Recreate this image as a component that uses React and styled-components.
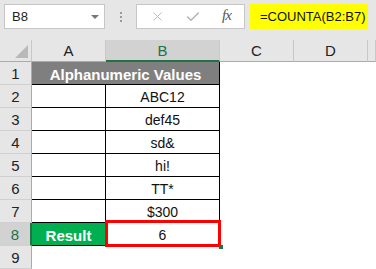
import styled, { createGlobalStyle } from "styled-components";
import { X, Check } from "lucide-react";

const GlobalStyle = createGlobalStyle`
  html, body {
    margin: 0;
    padding: 0;
    background: #ffffff;
    font-family: "Liberation Sans", Arial, sans-serif;
    overflow: hidden;
  }
`;

const columns = [
  { name: "A", width: 74 },
  { name: "B", width: 114, active: true },
  { name: "C", width: 74 },
  { name: "D", width: 74 },
  { name: "", width: 8 },
];

const values = ["ABC12", "def45", "sd&", "hi!", "TT*", "$300"];

function App() {
  return (
    <>
      <GlobalStyle />
      <Wrapper>
        <FormulaBar>
          <NameBox>
            <span>B8</span>
            <DropArrow />
          </NameBox>
          <Grip>
            <i />
            <i />
            <i />
          </Grip>
          <IconBox>
            <X size={15} strokeWidth={1.4} color="#b3b3b3" />
            <Check size={16} strokeWidth={2.2} color="#b3b3b3" />
            <Fx>fx</Fx>
          </IconBox>
          <FormulaInput>=COUNTA(B2:B7)</FormulaInput>
        </FormulaBar>

        <Sheet>
          <Corner>
            <CornerTriangle />
          </Corner>
          {columns.map((col, i) => (
            <ColHeader key={i} $active={col.active}>
              {col.name}
            </ColHeader>
          ))}

          {/* row 1 */}
          <RowHeader>1</RowHeader>
          <TitleCell>Alphanumeric Values</TitleCell>
          <Cell />
          <Cell />
          <Cell />

          {values.map((v, i) => (
            <Row key={v} n={i + 2} value={v} />
          ))}

          {/* row 8 */}
          <RowHeader $active>8</RowHeader>
          <ResultLabel>Result</ResultLabel>
          <TableCell>
            6
            <Selection>
              <FillHandle />
            </Selection>
          </TableCell>
          <Cell />
          <Cell />
          <Cell />

          {/* row 9 */}
          <RowHeader>9</RowHeader>
          <Cell />
          <Cell />
          <Cell />
          <Cell />
          <Cell />
        </Sheet>
      </Wrapper>
    </>
  );
}

function Row({ n, value }) {
  return (
    <>
      <RowHeader>{n}</RowHeader>
      <TableCell />
      <TableCell>{value}</TableCell>
      <Cell />
      <Cell />
      <Cell />
    </>
  );
}

const Wrapper = styled.div`
  width: 376px;
  height: 269px;
  overflow: hidden;
  background: #ffffff;
`;

const FormulaBar = styled.div`
  display: flex;
  align-items: flex-start;
  height: 40px;
  box-sizing: border-box;
  padding: 4px 0 0 4px;
  background: #e6e6e6;
`;

const NameBox = styled.div`
  width: 101px;
  height: 25px;
  box-sizing: border-box;
  background: #ffffff;
  border: 1px solid #c6c6c6;
  display: flex;
  align-items: center;
  justify-content: space-between;
  padding: 0 5px 0 7px;
  font-size: 13px;
  color: #222;
`;

const DropArrow = styled.span`
  width: 0;
  height: 0;
  border-left: 4px solid transparent;
  border-right: 4px solid transparent;
  border-top: 4px solid #777777;
`;

const Grip = styled.div`
  width: 31px;
  height: 25px;
  display: flex;
  flex-direction: column;
  align-items: center;
  justify-content: center;
  gap: 2px;

  i {
    width: 2px;
    height: 2px;
    background: #9a9a9a;
  }
`;

const IconBox = styled.div`
  width: 109px;
  height: 25px;
  box-sizing: border-box;
  background: #ffffff;
  border: 1px solid #c6c6c6;
  display: grid;
  grid-template-columns: 36px 36px 1fr;
  align-items: center;
  justify-items: center;
  padding-left: 2px;
`;

const Fx = styled.span`
  font-family: "Liberation Serif", "Times New Roman", serif;
  font-style: italic;
  font-size: 15px;
  color: #555555;
  letter-spacing: -1px;
  margin: -2px 2px 0 0;
`;

const FormulaInput = styled.div`
  margin-left: 5px;
  width: 118px;
  height: 25px;
  box-sizing: border-box;
  background: #ffff00;
  display: flex;
  align-items: center;
  padding-left: 10px;
  font-size: 13px;
  color: #111;
  white-space: nowrap;
`;

const Sheet = styled.div`
  display: grid;
  grid-template-columns: 32px 74px 114px 74px 74px 8px;
  grid-template-rows: 22px repeat(9, 23px);
  font-size: 14px;
`;

const Corner = styled.div`
  position: relative;
  background: #e6e6e6;
  border-right: 1px solid #c8c8c8;
  border-bottom: 1px solid #ababab;
  box-sizing: border-box;
`;

const CornerTriangle = styled.span`
  position: absolute;
  right: 3px;
  bottom: 3px;
  width: 0;
  height: 0;
  border-left: 13px solid transparent;
  border-bottom: 13px solid #b9b9b9;
`;

const ColHeader = styled.div`
  box-sizing: border-box;
  display: flex;
  align-items: center;
  justify-content: center;
  font-size: 15px;
  background: ${({ $active }) => ($active ? "#d2d2d2" : "#e6e6e6")};
  color: ${({ $active }) => ($active ? "#217346" : "#222222")};
  border-right: 1px solid #c8c8c8;
  border-bottom: ${({ $active }) => ($active ? "2px solid #217346" : "1px solid #ababab")};
  padding-top: ${({ $active }) => ($active ? "1px" : "0")};
`;

const RowHeader = styled.div`
  box-sizing: border-box;
  display: flex;
  align-items: center;
  justify-content: center;
  font-size: 15px;
  background: ${({ $active }) => ($active ? "#d2d2d2" : "#e6e6e6")};
  color: ${({ $active }) => ($active ? "#217346" : "#222222")};
  border-right: ${({ $active }) => ($active ? "2px solid #217346" : "1px solid #ababab")};
  border-bottom: 1px solid #d0d0d0;
  padding-top: 1px;
`;

const Cell = styled.div`
  background: #ffffff;
`;

const TableCell = styled.div`
  position: relative;
  box-sizing: border-box;
  display: flex;
  align-items: center;
  justify-content: center;
  padding-top: 2px;
  color: #111111;
  background: #ffffff;
  border-right: 1px solid #000000;
  border-bottom: 1px solid #000000;
`;

const TitleCell = styled.div`
  grid-column: span 2;
  box-sizing: border-box;
  display: flex;
  align-items: center;
  justify-content: center;
  padding-top: 2px;
  font-size: 15px;
  background: #7f7f7f;
  color: #ffffff;
  font-weight: bold;
  border-right: 1px solid #000000;
  border-bottom: 1px solid #000000;
`;

const ResultLabel = styled(TitleCell)`
  grid-column: auto;
  background: #00b050;
`;

const Selection = styled.div`
  position: absolute;
  left: -1px;
  right: -2px;
  top: -3px;
  bottom: -2px;
  border: 3px solid #ff0000;
`;

const FillHandle = styled.span`
  position: absolute;
  right: -5px;
  bottom: -5px;
  width: 4px;
  height: 4px;
  background: #217346;
`;

export default App;
